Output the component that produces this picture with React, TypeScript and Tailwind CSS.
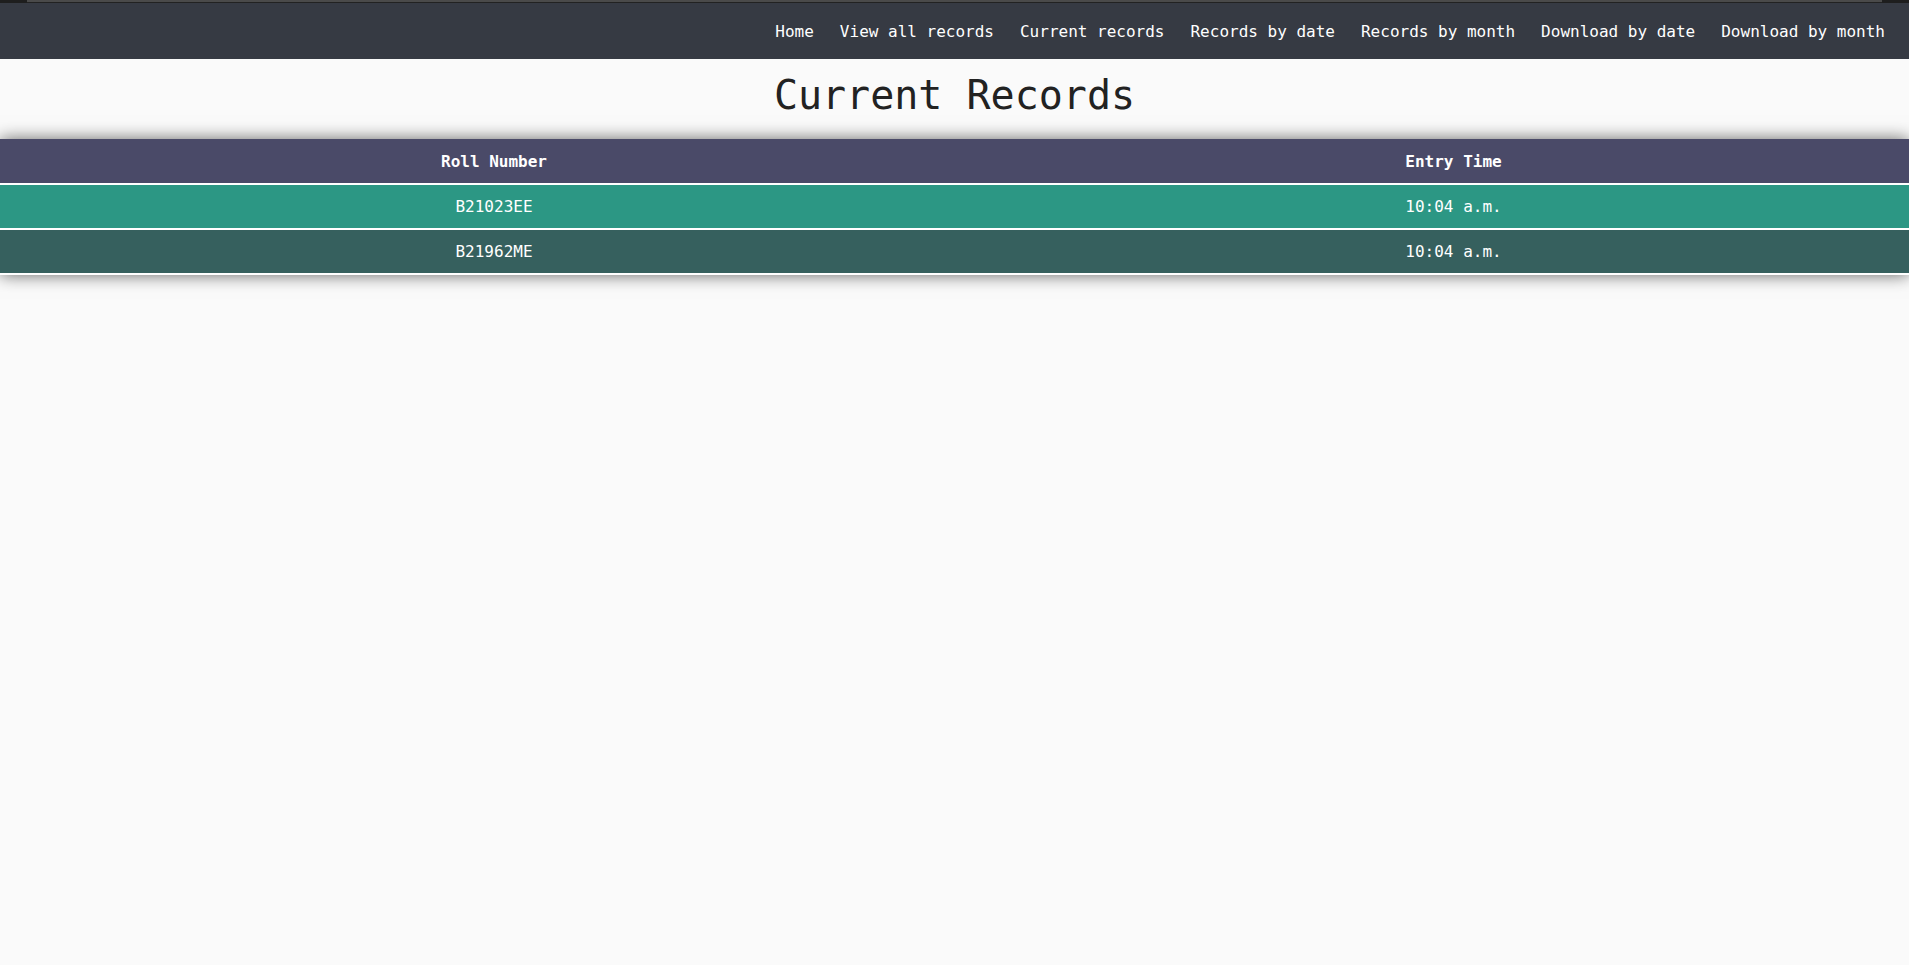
const links = [
  "Home",
  "View all records",
  "Current records",
  "Records by date",
  "Records by month",
  "Download by date",
  "Download by month",
];

const records = [
  { roll: "B21023EE", time: "10:04 a.m." },
  { roll: "B21962ME", time: "10:04 a.m." },
];

export default function App() {
  return (
    <div className="min-h-[965px] bg-[#fafafa] font-['DejaVu_Sans_Mono',monospace]">
      {/* navbar */}
      <div className="h-[59px] bg-[#363a43] flex flex-col">
        <div className="h-[3px] flex">
          <div className="w-[27px] bg-[#1e1e1e]" />
          <div className="flex-1 bg-[#4a4a4a] border-b border-[#222]" />
          <div className="w-[27px] bg-[#1e1e1e]" />
        </div>
        <nav className="flex-1 flex justify-end items-center pr-[11px] pt-[1px]">
          {links.map((l) => (
            <a key={l} href="#" className="px-[13px] text-white text-[16px] leading-none">
              {l}
            </a>
          ))}
        </nav>
      </div>

      <h1 className="text-center text-[40px] text-[#222] leading-[47px] pt-[13px] pb-[20px]">
        Current Records
      </h1>

      {/* table */}
      <table className="w-full border-collapse text-white text-[16px] shadow-[0_0_16px_rgba(0,0,0,0.6)]">
        <thead>
          <tr className="bg-[#4a4a68] h-[45px] border-b-2 border-white">
            <th className="font-bold w-[988px] pt-[2px]">Roll Number</th>
            <th className="font-bold pt-[2px] pl-[10px]">Entry Time</th>
          </tr>
        </thead>
        <tbody>
          {records.map((r, i) => (
            <tr
              key={r.roll}
              className={`h-[45px] border-b-2 border-white ${i % 2 === 0 ? "bg-[#2c9784]" : "bg-[#36605e]"}`}
            >
              <td className="text-center">{r.roll}</td>
              <td className="text-center pl-[10px]">{r.time}</td>
            </tr>
          ))}
        </tbody>
      </table>
    </div>
  );
}
